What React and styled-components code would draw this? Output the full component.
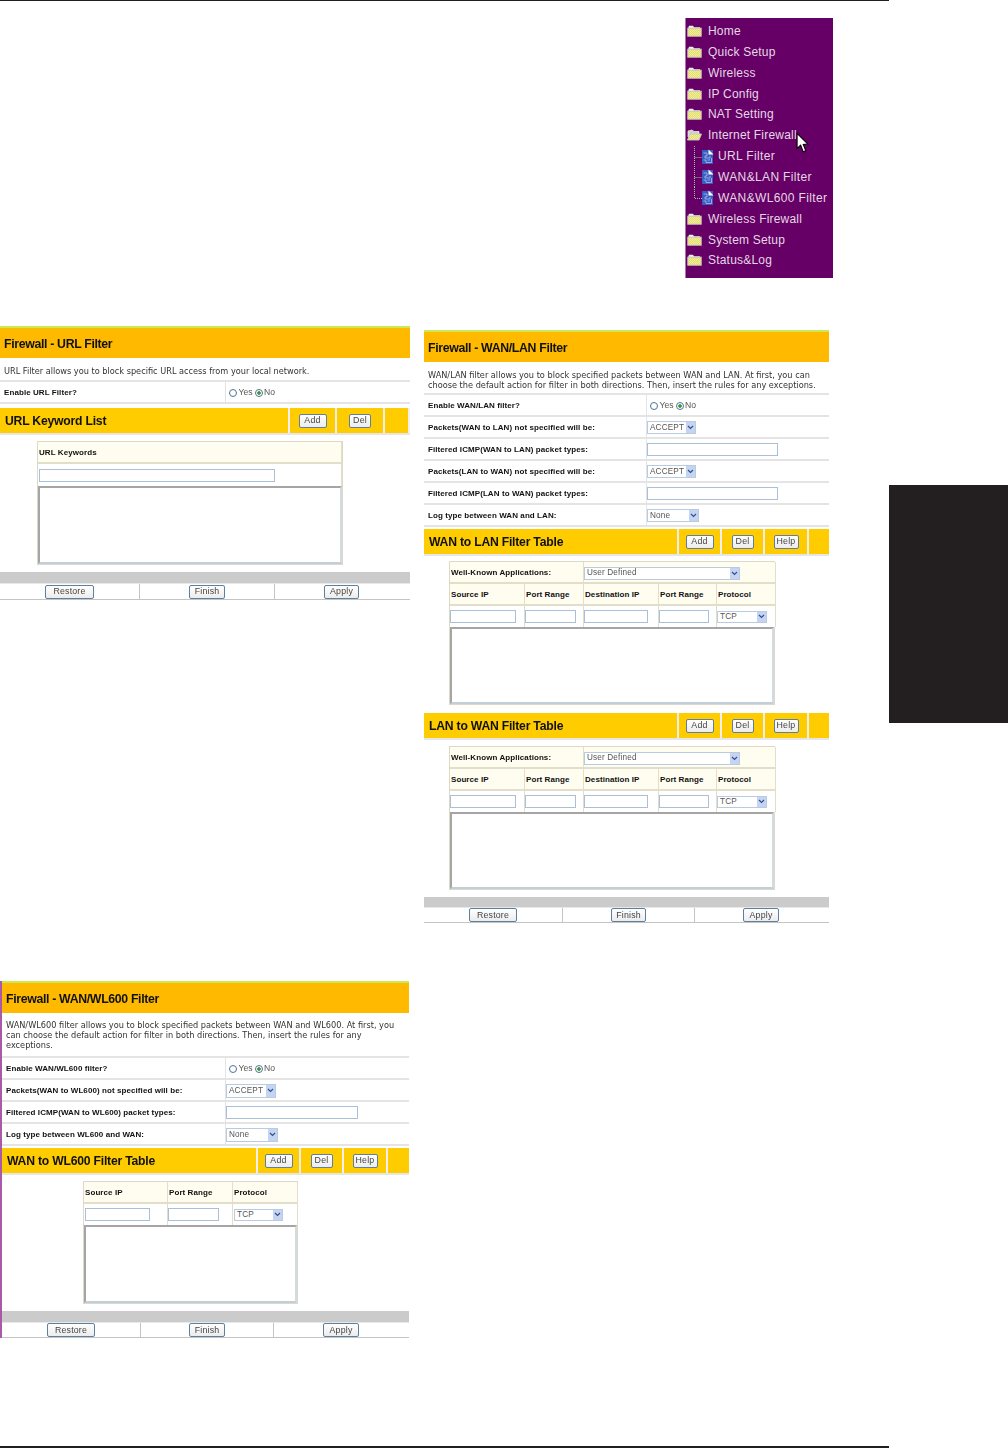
import React from "react";
import styled, { createGlobalStyle } from "styled-components";

const Global = createGlobalStyle`
  html, body { margin: 0; padding: 0; background: #fff; }
  * { box-sizing: border-box; }
`;

const Page = styled.div`
  display: flex;
  width: 1008px;
  height: 1448px;
  overflow: hidden;
  background: #fff;
`;
const Main = styled.main`
  width: 889px;
  height: 1448px;
  flex: none;
  display: flex;
  flex-direction: column;
  border-top: 1px solid #231f20;
  border-bottom: 2px solid #231f20;
`;
const Side = styled.aside`
  flex: 1;
  padding-top: 485px;
`;
const Tab = styled.div`
  height: 238px;
  background: #231f20;
`;
const MenuRow = styled.div`
  display: flex;
  justify-content: flex-end;
  padding: 17px 56px 0 0;
`;
const Menu = styled.nav`
  position: relative;
  width: 148px;
  height: 260px;
  padding-top: 2.5px;
  background: #660066;
  border-left: 1px solid #a878a8;
`;
const MenuItem = styled.div`
  display: flex;
  align-items: center;
  height: 20.86px;
  padding-left: ${(p) => (p.$sub ? "0" : "1px")};
  font: 12px/1 "Liberation Sans", Arial, sans-serif;
  letter-spacing: ${(p) => (p.$sub ? "0.36px" : "0.2px")};
  color: #e4d8e4;
  white-space: nowrap;
`;
const MenuLabel = styled.span`
  margin-left: ${(p) => (p.$sub ? "1px" : "6px")};
`;
const Cursor = styled.svg`
  position: absolute;
  left: 110px;
  top: 114px;
`;

const Columns = styled.div`
  display: flex;
  margin-top: 48px;
`;
const LeftCol = styled.div`
  width: 410px;
  flex: none;
  display: flex;
  flex-direction: column;
`;
const RightCol = styled.div`
  width: 405px;
  flex: none;
  margin: 4px 0 0 14px;
`;

const Panel = styled.section`
  width: ${(p) => p.$w}px;
  margin-top: ${(p) => p.$top || 0}px;
  border-left: ${(p) => (p.$edge ? "2px solid #a85aa8" : "none")};
  filter: blur(0.35px);
  font-family: "DejaVu Sans", Verdana, sans-serif;
`;
const TitleBar = styled.h1`
  margin: 0;
  height: 32px;
  padding: 2px 0 0 4px;
  display: flex;
  align-items: center;
  border-top: 2px solid #c9ea55;
  background: #ffba00;
  font: bold 12.3px/1 "Liberation Sans", Arial, sans-serif;
  letter-spacing: -0.33px;
  color: #111;
`;
const Desc = styled.p`
  margin: 0;
  height: ${(p) => p.$h}px;
  padding: ${(p) => p.$pt}px ${(p) => p.$pr}px 0 4px;
  border-bottom: 2px solid #e4e4e4;
  font-size: 8.2px;
  line-height: 10px;
  color: #333;
`;
const FieldRow = styled.div`
  display: grid;
  grid-template-columns: ${(p) => p.$label}px 1fr;
  height: 22px;
  border-bottom: 2px solid #e4e4e4;
`;
const FieldLabel = styled.div`
  display: flex;
  align-items: center;
  padding: 1px 0 0 4px;
  font: bold 8px/1 "Liberation Sans", Arial, sans-serif;
  letter-spacing: 0.08px;
  color: #111;
  white-space: nowrap;
`;
const FieldValue = styled.div`
  display: flex;
  align-items: center;
  border-left: 1px solid #e4e4e4;
  padding: 1px 0 0 ${(p) => p.$pad ?? 0}px;
`;
const RadioText = styled.span`
  font: 8.6px/1 "Liberation Sans", Arial, sans-serif;
  color: #555;
  margin: 0 2px 0 1.5px;
`;
const Radio = styled.span`
  width: 8px;
  height: 8px;
  border-radius: 50%;
  border: 1px solid #4f7196;
  background: ${(p) => (p.$on ? "radial-gradient(circle, #3a9a3a 0 1.5px, #fff 2px)" : "#fff")};
`;
const TextBox = styled.input`
  display: block;
  width: ${(p) => p.$w}px;
  height: ${(p) => p.$h || 13}px;
  margin: 0 0 0 ${(p) => p.$ml || 0}px;
  padding: 0;
  background: #fff;
  border: 1px solid #a9c0d8;
  border-radius: 0;
  outline: none;
`;
const SelectBox = styled.div`
  display: flex;
  align-items: center;
  justify-content: space-between;
  width: ${(p) => p.$w}px;
  height: ${(p) => p.$h || 13}px;
  margin-left: ${(p) => p.$ml || 0}px;
  padding: 0 0 0 2px;
  background: #fff;
  border: 1px solid #b8cbe0;
  font: 8.2px/1 "Liberation Sans", Arial, sans-serif;
  letter-spacing: 0.15px;
  color: #555;
`;
const SelectText = styled.span`
  padding-top: 1px;
`;
const SelectArrow = styled.span`
  display: flex;
  align-items: center;
  justify-content: center;
  width: 9px;
  height: 100%;
  background: #c6d4f4;
`;
const SectionBar = styled.div`
  display: grid;
  grid-template-columns: ${(p) => p.$cols};
  column-gap: 2px;
  height: 27px;
  margin-top: ${(p) => p.$top}px;
  border-bottom: 2px solid #e6e6e6;
  background: #efefef;
`;
const SectionTitle = styled.h2`
  margin: 0;
  display: flex;
  align-items: center;
  padding: 1px 0 0 5px;
  background: #ffcc00;
  font: bold 12.2px/1 "Liberation Sans", Arial, sans-serif;
  letter-spacing: -0.22px;
  color: #111;
  white-space: nowrap;
`;
const SectionCell = styled.div`
  display: flex;
  align-items: center;
  justify-content: center;
  background: #ffcc00;
`;
const Btn = styled.button`
  width: ${(p) => p.$w}px;
  height: 14px;
  padding: 0;
  background: linear-gradient(#fff, #ececec);
  border: 1px solid #5f7f9f;
  border-radius: 2px;
  font: 8.8px/1 "Liberation Sans", Arial, sans-serif;
  letter-spacing: 0.2px;
  color: #444;
`;
const Inner = styled.div`
  width: ${(p) => p.$w}px;
  margin: ${(p) => p.$top}px 0 0 ${(p) => p.$left}px;
  border: 1px solid #ddd9c8;
`;
const InnerRow = styled.div`
  display: grid;
  grid-template-columns: ${(p) => p.$cols};
  height: ${(p) => p.$h}px;
`;
const HeadCell = styled.div`
  display: flex;
  align-items: center;
  padding: 2px 0 0 1px;
  background: #fffdf0;
  border: solid #e2deca;
  border-width: 0 1px 2px 0;
  font: bold 8px/1 "Liberation Sans", Arial, sans-serif;
  letter-spacing: 0.08px;
  color: #111;
  white-space: nowrap;
`;
const InputCell = styled.div`
  display: flex;
  align-items: center;
  background: ${(p) => (p.$head ? "#fffdf0" : "#fff")};
  border: solid #e2deca;
  border-width: 0 1px ${(p) => (p.$head ? "2px" : "0")} 0;
  padding: ${(p) => (p.$head ? "2px" : "0")} 0 0 ${(p) => p.$pad || 0}px;
`;
const ListArea = styled.textarea`
  display: block;
  width: 100%;
  height: ${(p) => p.$h}px;
  margin: 0;
  padding: 0;
  resize: none;
  background: #fff;
  border: 2px solid;
  border-color: #a5a5a5 #d2dae2 #c2ced8 #a5a5a5;
  border-radius: 0;
  outline: none;
`;
const GreyBar = styled.div`
  height: ${(p) => p.$h || 12}px;
  margin-top: ${(p) => p.$top}px;
  background: #cbcbcb;
  border-bottom: 1px solid #e8e8e8;
`;
const ActionRow = styled.div`
  display: grid;
  grid-template-columns: ${(p) => p.$cols};
  height: ${(p) => p.$h}px;
  border-bottom: 1px solid #c4c4c4;
`;
const ActionCell = styled.div`
  display: flex;
  align-items: center;
  padding-left: ${(p) => p.$pad}px;
  border-right: 1px solid #c4c4c4;
  &:last-child { border-right: none; }
`;

const Chevron = () => (
  <svg width="7" height="5" viewBox="0 0 7 5">
    <path d="M1 1 L3.5 3.5 L6 1" fill="none" stroke="#33508a" strokeWidth="1.2" />
  </svg>
);

const FolderIcon = ({ open }) => (
  <svg width="15" height="12" viewBox="0 0 15 12" style={{ flex: "none" }}>
    <defs>
      <pattern id="dither" width="2" height="2" patternUnits="userSpaceOnUse">
        <rect width="2" height="2" fill="#fbf36a" />
        <rect width="1" height="1" fill="#d9d6a0" />
        <rect x="1" y="1" width="1" height="1" fill="#d9d6a0" />
      </pattern>
    </defs>
    {open ? (
      <>
        <path d="M1 2 L5 1 L7 2.5 L12 2.5 L12 5 L1 8 Z" fill="#d0d0d0" stroke="#f4f4f4" strokeWidth="0.7" />
        <path d="M0.5 11 L3 5 L14.5 5 L12 11 Z" fill="url(#dither)" stroke="#c8c8c8" strokeWidth="0.9" />
      </>
    ) : (
      <>
        <path d="M1 3.5 L2 0.8 L6 0.8 L7 2.3 L13 2.3 L13 4 L1 4 Z" fill="#f0f0f0" />
        <rect x="0.8" y="3.2" width="13.4" height="8" fill="url(#dither)" stroke="#c8c6b8" strokeWidth="1" />
      </>
    )}
  </svg>
);

const TreeDoc = ({ last }) => (
  <svg width="31" height="21" viewBox="0 0 31 21" style={{ flex: "none" }}>
    <path
      d={last ? "M8.5 0 V11.5 H16" : "M8.5 0 V21 M8.5 11.5 H16"}
      fill="none"
      stroke="#a0c0a0"
      strokeWidth="1"
      strokeDasharray="1 1"
    />
    <rect x="16" y="4" width="11" height="14" fill="#3a5cc0" />
    <path d="M22.5 3.5 L27.5 8.5 L22.5 8.5 Z" fill="#fff" />
    <path
      d="M17.5 7 H21 V10 H19 V12 H24 V10 M17.5 14 H20 V16.5 H25.5 V12 M21.5 14 H24"
      fill="none"
      stroke="#a8c0f0"
      strokeWidth="0.8"
    />
  </svg>
);

const Arrow = () => (
  <Cursor width="13" height="21" viewBox="0 0 12 19">
    <path
      d="M1 1 V15 L4.3 12 L6.6 18 L9 17 L6.7 11.3 L11 11 Z"
      fill="#fff"
      stroke="#000"
      strokeWidth="1"
    />
  </Cursor>
);

const Field = ({ label, split, children, pad }) => (
  <FieldRow $label={split}>
    <FieldLabel>{label}</FieldLabel>
    <FieldValue $pad={pad}>{children}</FieldValue>
  </FieldRow>
);

const YesNo = ({ label, split }) => (
  <Field label={label} split={split} pad={3}>
    <Radio />
    <RadioText>Yes</RadioText>
    <Radio $on />
    <RadioText>No</RadioText>
  </Field>
);

const Select = ({ children, w, h, ml }) => (
  <SelectBox $w={w} $h={h} $ml={ml}>
    <SelectText>{children}</SelectText>
    <SelectArrow>
      <Chevron />
    </SelectArrow>
  </SelectBox>
);

const Section = ({ title, cols, top, buttons }) => (
  <SectionBar $cols={cols} $top={top}>
    <SectionTitle>{title}</SectionTitle>
    {buttons.map(([t, w]) => (
      <SectionCell key={t}>
        <Btn $w={w}>{t}</Btn>
      </SectionCell>
    ))}
    <SectionCell />
  </SectionBar>
);

const Actions = ({ cols, h, items }) => (
  <ActionRow $cols={cols} $h={h}>
    {items.map(([t, pad, w]) => (
      <ActionCell key={t} $pad={pad}>
        <Btn $w={w}>{t}</Btn>
      </ActionCell>
    ))}
  </ActionRow>
);

const keyButtons = [["Add", 28], ["Del", 22]];
const tableButtons = [["Add", 28], ["Del", 22], ["Help", 25]];

const FilterInner = ({ top }) => (
  <Inner $w={326} $top={top} $left={25}>
    <InnerRow $cols="134px 192px" $h={22}>
      <HeadCell>Well-Known Applications:</HeadCell>
      <InputCell $head>
        <Select w={156} h={13}>User Defined</Select>
      </InputCell>
    </InnerRow>
    <InnerRow $cols="75px 59px 75px 58px 59px" $h={22}>
      <HeadCell>Source IP</HeadCell>
      <HeadCell>Port Range</HeadCell>
      <HeadCell>Destination IP</HeadCell>
      <HeadCell>Port Range</HeadCell>
      <HeadCell>Protocol</HeadCell>
    </InnerRow>
    <InnerRow $cols="75px 59px 75px 58px 59px" $h={21}>
      <InputCell><TextBox $w={66} readOnly /></InputCell>
      <InputCell><TextBox $w={51} readOnly /></InputCell>
      <InputCell><TextBox $w={64} readOnly /></InputCell>
      <InputCell><TextBox $w={50} readOnly /></InputCell>
      <InputCell><Select w={50} h={12}>TCP</Select></InputCell>
    </InnerRow>
    <ListArea $h={77} readOnly />
  </Inner>
);

export default function App() {
  const menu = [
    ["Home"], ["Quick Setup"], ["Wireless"], ["IP Config"], ["NAT Setting"],
    ["Internet Firewall", "open"], ["URL Filter", "sub"], ["WAN&LAN Filter", "sub"],
    ["WAN&WL600 Filter", "last"], ["Wireless Firewall"], ["System Setup"], ["Status&Log"],
  ];
  return (
    <Page>
      <Global />
      <Main>
        <MenuRow>
          <Menu>
            {menu.map(([t, k]) =>
              k === "sub" || k === "last" ? (
                <MenuItem key={t} $sub>
                  <TreeDoc last={k === "last"} />
                  <MenuLabel $sub>{t}</MenuLabel>
                </MenuItem>
              ) : (
                <MenuItem key={t}>
                  <FolderIcon open={k === "open"} />
                  <MenuLabel>{t}</MenuLabel>
                </MenuItem>
              )
            )}
            <Arrow />
          </Menu>
        </MenuRow>
        <Columns>
          <LeftCol>
            <Panel $w={410}>
              <TitleBar>Firewall - URL Filter</TitleBar>
              <Desc $h={24} $pt={8} $pr={12}>URL Filter allows you to block specific URL access from your local network.</Desc>
              <YesNo label="Enable URL Filter?" split={225} />
              <Section title="URL Keyword List" cols="288px 45px 46px 23px 2px" top={4} buttons={keyButtons} />
              <Inner $w={306} $top={6} $left={37}>
                <InnerRow $cols="1fr" $h={22}><HeadCell>URL Keywords</HeadCell></InnerRow>
                <InnerRow $cols="1fr" $h={22}>
                  <InputCell $pad={1}><TextBox $w={236} readOnly /></InputCell>
                </InnerRow>
                <ListArea $h={78} readOnly />
              </Inner>
              <GreyBar $top={7} />
              <Actions cols="140px 135px 135px" h={16} items={[["Restore", 45, 49], ["Finish", 49, 36], ["Apply", 49, 35]]} />
            </Panel>
            <Panel $w={409} $edge $top={381}>
              <TitleBar>Firewall - WAN/WL600 Filter</TitleBar>
              <Desc $h={45} $pt={7} $pr={8}>
                WAN/WL600 filter allows you to block specified packets between WAN and WL600. At first, you can choose the default action for filter in both directions. Then, insert the rules for any exceptions.
              </Desc>
              <YesNo label="Enable WAN/WL600 filter?" split={223} />
              <Field label="Packets(WAN to WL600) not specified will be:" split={223}>
                <Select w={50} h={14}>ACCEPT</Select>
              </Field>
              <Field label="Filtered ICMP(WAN to WL600) packet types:" split={223}>
                <TextBox $w={132} readOnly />
              </Field>
              <Field label="Log type between WL600 and WAN:" split={223}>
                <Select w={52} h={14}>None</Select>
              </Field>
              <Section title="WAN to WL600 Filter Table" cols="254px 41px 41px 42px 21px" top={2} buttons={tableButtons} />
              <Inner $w={215} $top={6} $left={81}>
                <InnerRow $cols="84px 65px 65px" $h={22}>
                  <HeadCell>Source IP</HeadCell>
                  <HeadCell>Port Range</HeadCell>
                  <HeadCell>Protocol</HeadCell>
                </InnerRow>
                <InnerRow $cols="84px 65px 65px" $h={21}>
                  <InputCell $pad={1}><TextBox $w={65} readOnly /></InputCell>
                  <InputCell><TextBox $w={51} readOnly /></InputCell>
                  <InputCell $pad={1}><Select w={49} h={12}>TCP</Select></InputCell>
                </InnerRow>
                <ListArea $h={78} readOnly />
              </Inner>
              <GreyBar $top={7} />
              <Actions cols="139px 133px 135px" h={15} items={[["Restore", 45, 48], ["Finish", 48, 36], ["Apply", 49, 36]]} />
            </Panel>
          </LeftCol>
          <RightCol>
            <Panel $w={405}>
              <TitleBar>Firewall - WAN/LAN Filter</TitleBar>
              <Desc $h={33} $pt={8} $pr={12}>
                WAN/LAN filter allows you to block specified packets between WAN and LAN. At first, you can choose the default action for filter in both directions. Then, insert the rules for any exceptions.
              </Desc>
              <YesNo label="Enable WAN/LAN filter?" split={222} />
              <Field label="Packets(WAN to LAN) not specified will be:" split={222}>
                <Select w={49} h={13}>ACCEPT</Select>
              </Field>
              <Field label="Filtered ICMP(WAN to LAN) packet types:" split={222}>
                <TextBox $w={131} readOnly />
              </Field>
              <Field label="Packets(LAN to WAN) not specified will be:" split={222}>
                <Select w={49} h={13}>ACCEPT</Select>
              </Field>
              <Field label="Filtered ICMP(LAN to WAN) packet types:" split={222}>
                <TextBox $w={131} readOnly />
              </Field>
              <Field label="Log type between WAN and LAN:" split={222}>
                <Select w={52} h={13}>None</Select>
              </Field>
              <Section title="WAN to LAN Filter Table" cols="253px 41px 41px 42px 20px" top={2} buttons={tableButtons} />
              <FilterInner top={5} />
              <Section title="LAN to WAN Filter Table" cols="253px 41px 41px 42px 20px" top={8} buttons={tableButtons} />
              <FilterInner top={6} />
              <GreyBar $top={7} $h={11} />
              <Actions cols="139px 132px 134px" h={15} items={[["Restore", 45, 48], ["Finish", 48, 35], ["Apply", 48, 36]]} />
            </Panel>
          </RightCol>
        </Columns>
      </Main>
      <Side>
        <Tab />
      </Side>
    </Page>
  );
}
